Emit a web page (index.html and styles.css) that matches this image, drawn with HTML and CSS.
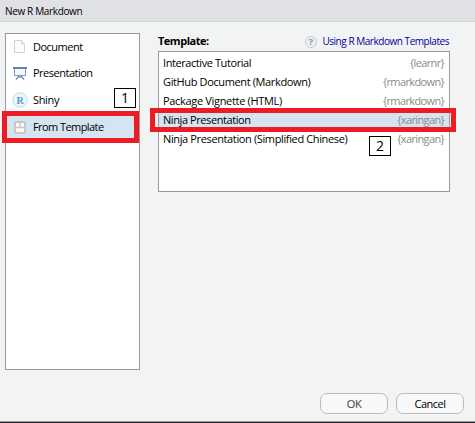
FILE: index.html
```
<!DOCTYPE html>
<html lang="en">
<head>
<meta charset="utf-8">
<title>New R Markdown</title>
<link rel="stylesheet" href="styles.css">
</head>
<body>
<div class="dialog">
  <header class="titlebar"><span>New R Markdown</span></header>
  <main class="content">
    <nav class="sidebar">
      <div class="kind">
        <svg class="icon" width="14" height="14" viewBox="0 0 14 14"><path d="M1.500.5h7l3 3.500v8.500h-10zM8.500.5v3.500h3" fill="#fdfdfd" stroke="#cfd3d6"/></svg>
        <span>Document</span>
      </div>
      <div class="kind">
        <svg class="icon" width="14" height="14" viewBox="0 0 14 14"><path d="M1.500 1v7.500h11V1" fill="#f4f7fb" stroke="#8299bb"/><path d="M1.500 8.500h11" stroke="#8299bb"/><path d="M0 1h14" stroke="#6585b1" stroke-width="2"/><path d="M6 9l-3 3.500M8 9l3 3.500M7 9v2" stroke="#7189ad" stroke-width="1.300"/></svg>
        <span>Presentation</span>
      </div>
      <div class="kind">
        <svg class="icon icon-shiny" width="16" height="18" viewBox="0 0 16 18"><circle cx="8" cy="8" r="7.300" fill="#edf6fc" stroke="#c4dceb"/><text x="8" y="11.500" text-anchor="middle" class="shiny-r">R</text></svg>
        <span class="t-shiny">Shiny</span>
      </div>
      <div class="kind selected">
        <svg class="icon" width="14" height="14" viewBox="0 0 14 14"><rect x="2" y="1" width="10" height="11" rx=".5" fill="#fafafa" stroke="#c6c8ca" stroke-width="2"/><path d="M7 1v5M2 6.500h10" stroke="#c6c8ca" stroke-width="1.500"/></svg>
        <span class="t-from">From Template</span>
      </div>
      <i class="mark mark-kind"></i>
      <b class="badge badge-one">1</b>
    </nav>
    <section class="templates">
      <div class="heading">
        <span class="label">Template:</span>
        <a class="help"><svg width="12" height="12" viewBox="0 0 12 12"><circle cx="6" cy="6" r="5.500" fill="#eceff2" stroke="#c5c9cd"/><text x="6" y="9.300" text-anchor="middle" class="question">?</text></svg><span>Using R Markdown Templates</span></a>
      </div>
      <div class="list">
        <div class="row"><span class="n1">Interactive Tutorial</span><span class="pkg">{learnr}</span></div>
        <div class="row"><span>GitHub Document (Markdown)</span><span class="pkg">{rmarkdown}</span></div>
        <div class="row"><span class="n3">Package Vignette (HTML)</span><span class="pkg">{rmarkdown}</span></div>
        <div class="row selected"><span class="n4">Ninja Presentation</span><span class="pkg">{xaringan}</span></div>
        <div class="row"><span>Ninja Presentation (Simplified Chinese)</span><span class="pkg">{xaringan}</span></div>
        <i class="mark mark-row"></i>
        <b class="badge badge-two">2</b>
      </div>
    </section>
  </main>
  <footer class="actions"><button class="ok">OK</button><button>Cancel</button></footer>
</div>
</body>
</html>
```
FILE: styles.css
```
* { box-sizing: border-box; }
body { margin: 0; font: 11px/15px "Open Sans", "Noto Sans", sans-serif; color: #000; }
.dialog { width: 475px; height: 423px; background: #f2f4f4; display: flex; flex-direction: column; border-bottom: 1px solid #20212b; box-shadow: inset 0 -1px #999; overflow: hidden; white-space: nowrap; }
.titlebar { height: 22px; flex: none; padding: 4px 5px; background: #dfe1e5; border-bottom: 1px solid #d5d8db; font-size: 10px; letter-spacing: -.35px; }
.content { display: flex; gap: 18px; padding: 11px 25px 0 5px; }
.sidebar { position: relative; width: 135px; height: 337px; border: 1px solid #999; background: #fff; letter-spacing: -.5px; }
.kind { height: 27px; display: flex; align-items: center; padding-left: 7px; gap: 6px; }
.kind .icon { flex: none; }
.kind > span { padding-bottom: 2px; }
.kind .icon-shiny { margin: 0 -1px; }
.kind:first-child { height: 26px; }
.t-shiny { letter-spacing: -.35px; }
.t-from { letter-spacing: -.57px; }
.selected { background: #d6e4f1; }
.shiny-r { font: bold 10px "Liberation Serif", serif; letter-spacing: 0; fill: #4aa3cf; }
.mark { position: absolute; border: 5px solid #ed1c24; }
.mark-kind { left: -4px; top: 77px; width: 137px; height: 32px; }
.mark-row { left: -9px; top: 56px; width: 306px; height: 24px; }
.badge { position: absolute; width: 22px; height: 20px; border: 1px solid #000; background: #fff; font: 14px/18px "Open Sans", sans-serif; letter-spacing: 0; text-align: center; }
.badge-one { left: 108px; top: 54px; }
.badge-two { left: 210px; top: 84px; }
.templates { width: 292px; }
.heading { display: flex; justify-content: space-between; height: 18px; }
.label { font-weight: bold; letter-spacing: -.5px; }
.help { display: flex; gap: 5px; font-size: 10px; letter-spacing: -.46px; color: #00009c; padding-right: 1px; height: 17px; align-items: center; }
.question { font: bold 9px "Open Sans", sans-serif; letter-spacing: 0; fill: #8196ac; }
.list { position: relative; height: 141px; border: 1px solid #999; background: #fff; padding-top: 1px; letter-spacing: -.37px; }
.row { height: 19px; display: flex; justify-content: space-between; align-items: center; padding: 0 5px 0 4px; }
.n1, .n4 { letter-spacing: -.42px; }
.n3 { letter-spacing: -.32px; }
.pkg { color: #8a8a8a; letter-spacing: -.63px; }
.actions { display: flex; justify-content: flex-end; gap: 8px; padding: 23px 11px 0 0; }
button { width: 68px; height: 21px; border: 1px solid #bbb; border-radius: 7px; background: #f7f8f9; font: 11px/15px "Open Sans", sans-serif; letter-spacing: -.5px; color: #000; padding: 0; }
.ok { color: #555; -webkit-text-stroke: .2px #555; }
```
